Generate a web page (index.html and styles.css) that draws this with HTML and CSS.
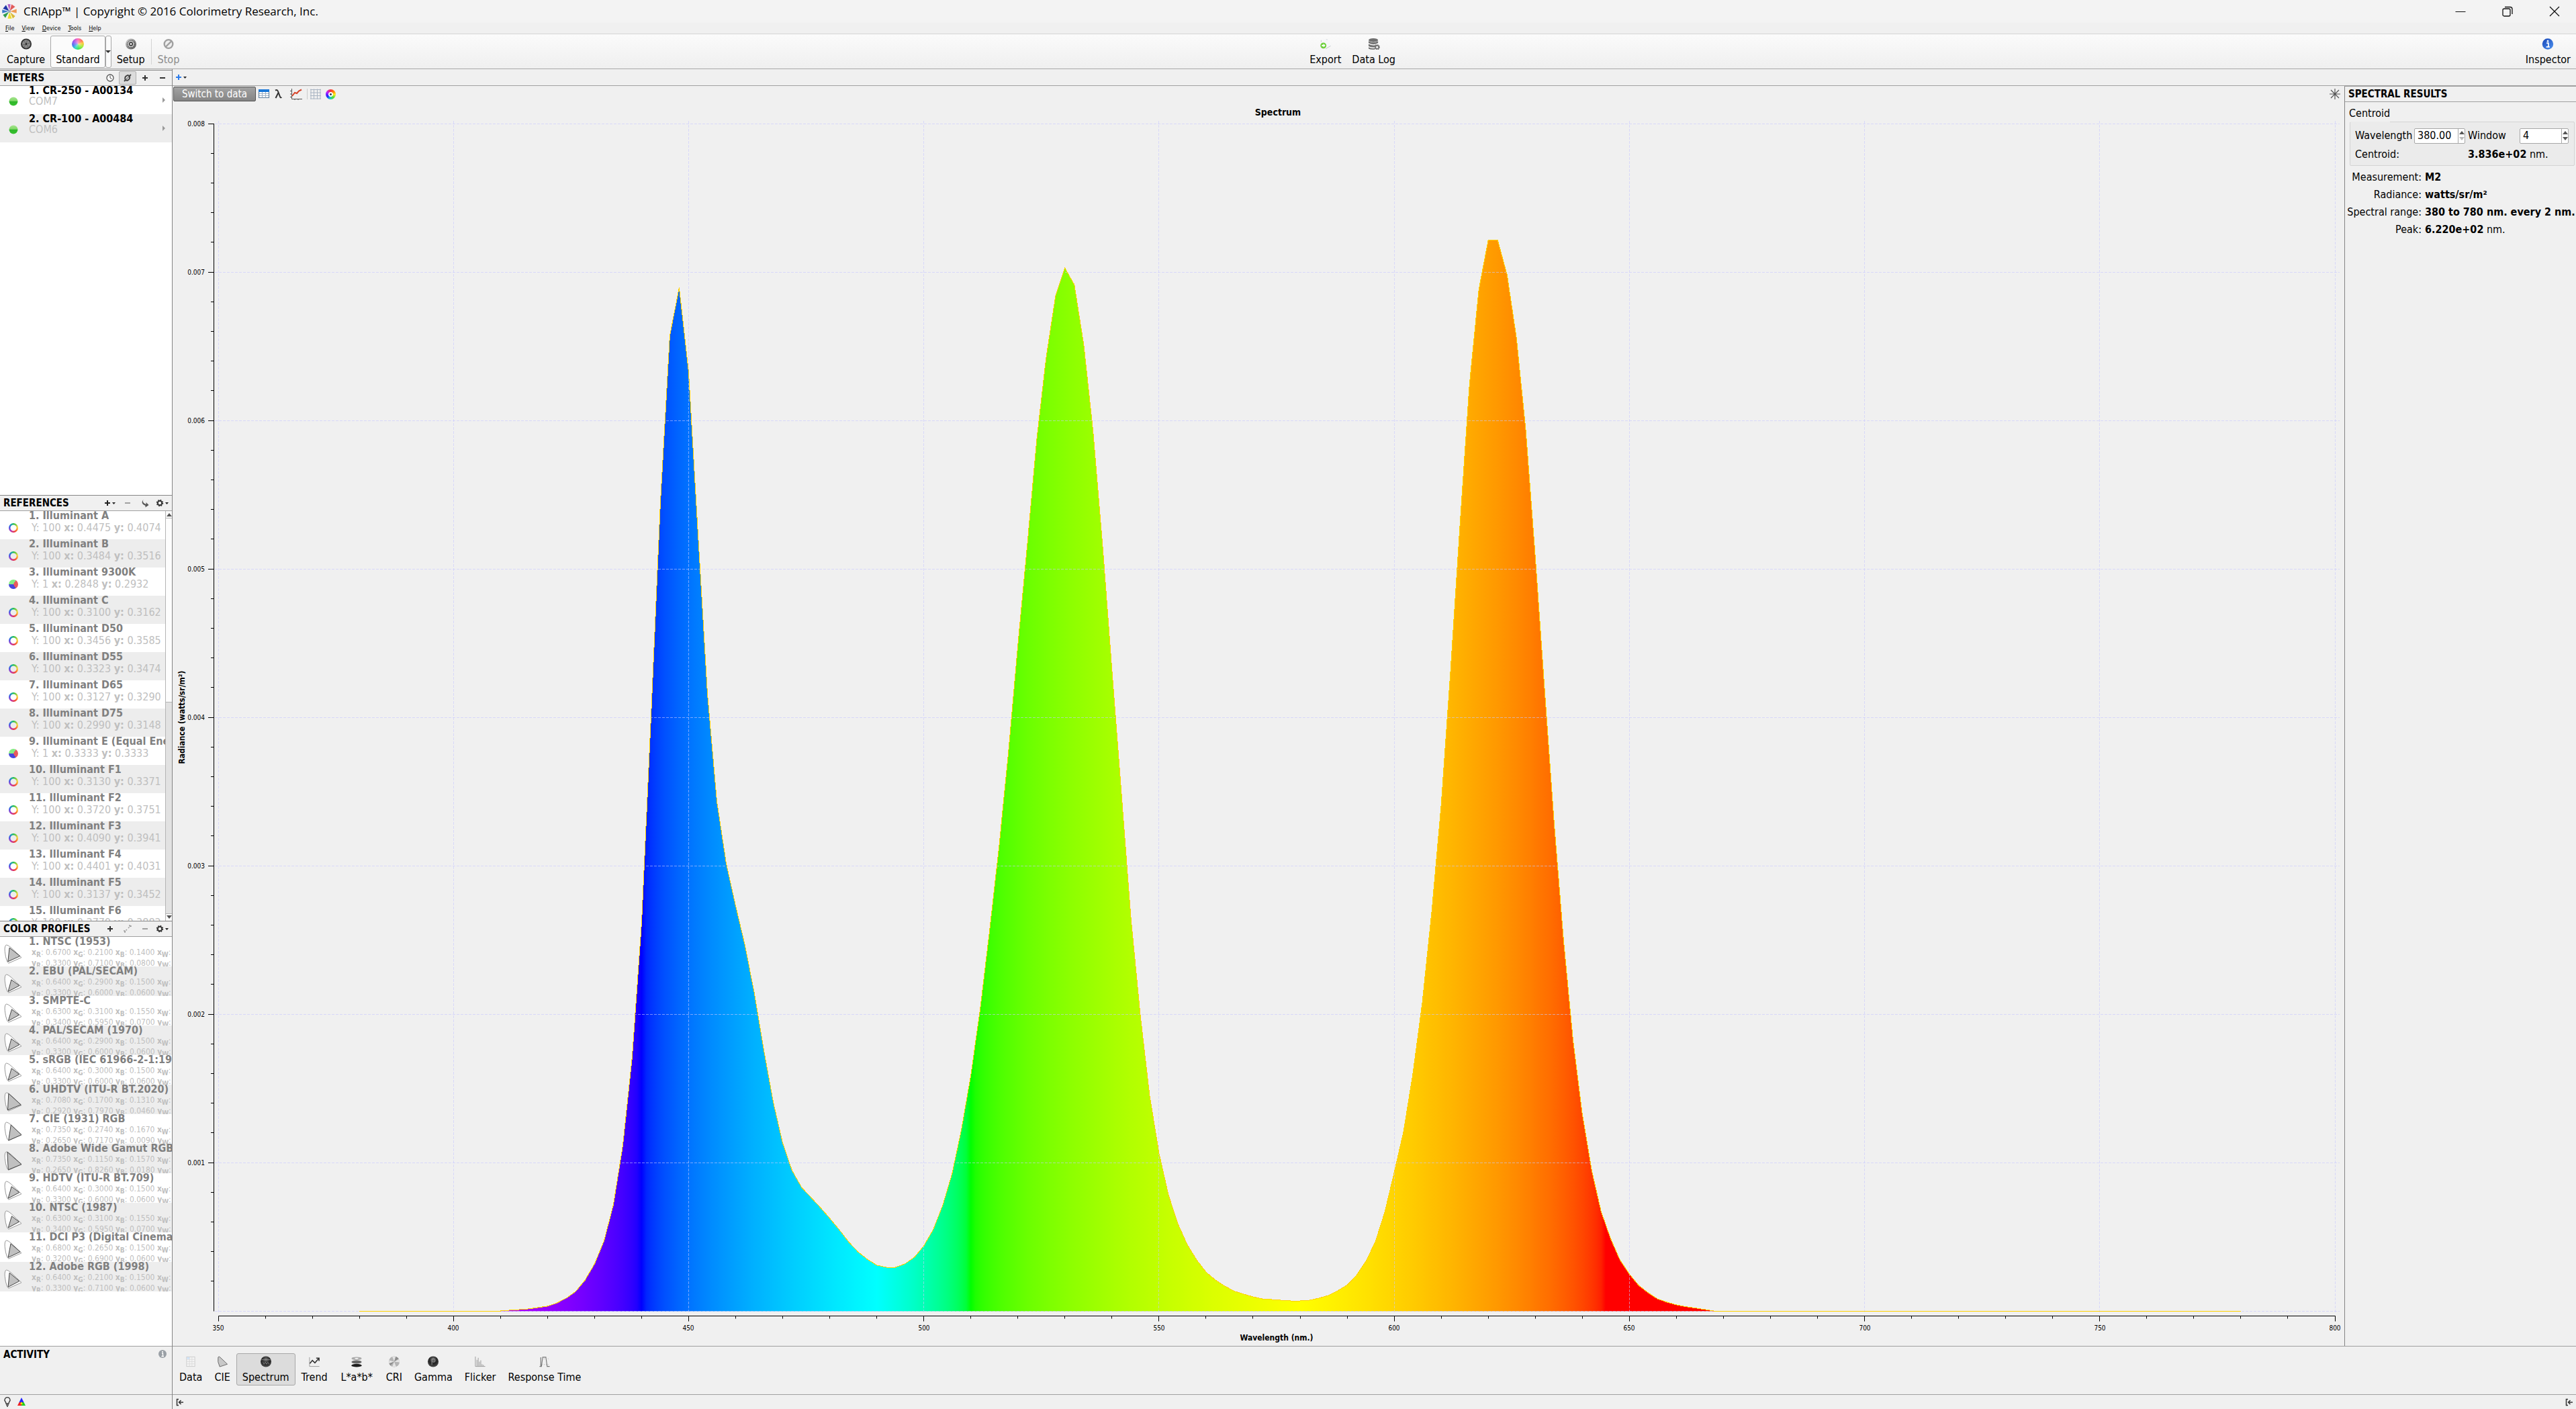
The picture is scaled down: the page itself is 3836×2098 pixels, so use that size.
FILE: index.html
```html
<!DOCTYPE html>
<html lang="en">
<head>
<meta charset="utf-8">
<title>CRIApp</title>
<link rel="stylesheet" href="styles.css">
</head>
<body>
<svg class="defs" aria-hidden="true">
  <defs>
    <radialGradient id="dark-ball" cx="50%" cy="30%" r="75%"><stop offset="0" stop-color="#777"/><stop offset="0.5" stop-color="#222"/><stop offset="1" stop-color="#555"/></radialGradient>
    <linearGradient id="steel" x1="0" y1="0" x2="1" y2="1"><stop offset="0" stop-color="#ddd"/><stop offset="0.5" stop-color="#8a8a8a"/><stop offset="1" stop-color="#555"/></linearGradient>
    <linearGradient id="green-ball" x1="0" y1="0" x2="0" y2="1"><stop offset="0" stop-color="#a6e48f"/><stop offset="0.45" stop-color="#7fd866"/><stop offset="0.5" stop-color="#2fb52a"/><stop offset="1" stop-color="#37c22f"/></linearGradient>
    <linearGradient id="blue-ball" x1="0" y1="0" x2="1" y2="1"><stop offset="0" stop-color="#1746b8"/><stop offset="1" stop-color="#4f93ef"/></linearGradient>
    <symbol id="plus" viewBox="0 0 26 20"><path d="M9 10h8M13 6v8" stroke="#333" stroke-width="2" fill="none"/></symbol>
    <symbol id="plus-menu" viewBox="0 0 26 20"><path d="M5 10h8M9 6v8" stroke="#222" stroke-width="2" fill="none"/><path d="M16 9h5l-2.500 3z" fill="#222"/></symbol>
    <symbol id="minus" viewBox="0 0 26 20"><path d="M9 10h8" stroke="currentColor" stroke-width="2"/></symbol>
    <symbol id="gear-menu" viewBox="0 0 26 20"><circle cx="9" cy="10" r="3.200" fill="none" stroke="#333" stroke-width="2"/><circle cx="9" cy="10" r="4.500" fill="none" stroke="#333" stroke-width="1.500" stroke-dasharray="1.800 1.734"/><path d="M17 9h5l-2.500 3z" fill="#222"/></symbol>
    <symbol id="dock" viewBox="0 0 16 16"><path d="M6 3.500H3.500v9H6M6.500 8H13M9.500 5L6.500 8l3 3" fill="none" stroke="#333" stroke-width="1.500"/></symbol>
  </defs>
</svg>

<div class="app">
  <header class="titlebar">
    <svg class="logo" viewBox="0 0 24 24">
      <g stroke="#fff" stroke-width="0.500">
        <path d="M12 12L9 1l5 0z" fill="#b05ac0"/><path d="M12 12L15 1l6 4z" fill="#e05a5a"/><path d="M12 12l11-4 0 7z" fill="#ee9a55"/><path d="M12 12l9 7-4 4z" fill="#d8b93a"/>
        <path d="M12 12l4 11-7 0z" fill="#ecdc2c"/><path d="M12 12L6 22l-4-5z" fill="#2d9a4a"/><path d="M12 12L1 15l0-6z" fill="#3a7ac8"/><path d="M12 12L2 8l5-6z" fill="#1f35a5"/>
      </g>
      <circle cx="12" cy="12" r="2" fill="#9ab"/>
    </svg>
    <h1 class="app-title">CRIApp™ | Copyright © 2016 Colorimetry Research, Inc.</h1>
    <div class="window-buttons">
      <button type="button" aria-label="Minimize"><svg viewBox="0 0 16 16"><path d="M0.500 8.500h15" stroke="#111"/></svg></button>
      <button type="button" aria-label="Restore"><svg viewBox="0 0 16 16"><rect x="1" y="4" width="11" height="11" rx="2" fill="none" stroke="#111" stroke-width="1.300"/><path d="M4 1.500h8q3 0 3 3v7.500" fill="none" stroke="#111" stroke-width="1.300"/></svg></button>
      <button type="button" aria-label="Close"><svg viewBox="0 0 16 16"><path d="M1 1l14 14M15 1L1 15" stroke="#111" stroke-width="1.300"/></svg></button>
    </div>
  </header>

  <nav class="menubar">
    <button type="button"><u>F</u>ile</button>
    <button type="button"><u>V</u>iew</button>
    <button type="button"><u>D</u>evice</button>
    <button type="button"><u>T</u>ools</button>
    <button type="button"><u>H</u>elp</button>
  </nav>

  <div class="toolbar">
    <div class="tool-group">
      <button type="button" class="tool"><svg viewBox="0 0 18 18"><circle cx="9" cy="9" r="7.500" fill="#8a8a8a" stroke="#333" stroke-width="2"/><path d="M9 9L5 3M9 9l7-2M9 9l4 6M9 9l-7 2M9 9l2-7M9 9l-4 6" stroke="#555" stroke-width="0.800"/><circle cx="9" cy="9" r="1.300" fill="#222"/></svg><span>Capture</span></button>
      <button type="button" class="tool tool-on"><i class="wheel"></i><span>Standard</span></button>
      <button type="button" class="tool-drop" aria-label="Capture mode"><svg viewBox="0 0 8 6"><path d="M0 1h8l-4 4z" fill="#333"/></svg></button>
      <button type="button" class="tool"><svg viewBox="0 0 18 18"><circle cx="9" cy="9" r="8.500" fill="url(#steel)"/><circle cx="9" cy="9" r="5.500" fill="#c4c4c4" stroke="#444" stroke-dasharray="2 1"/><circle cx="9" cy="9" r="2.500" fill="#ddd" stroke="#222" stroke-width="1.300"/></svg><span>Setup</span></button>
      <span class="tool-sep"></span>
      <button type="button" class="tool" disabled><svg viewBox="0 0 18 18"><circle cx="9" cy="9" r="6.700" fill="#eee" stroke="#a0a0a0" stroke-width="2.500"/><path d="M4.500 13.500l9-9" stroke="#a0a0a0" stroke-width="2.500"/></svg><span>Stop</span></button>
    </div>
    <div class="tool-group">
      <button type="button" class="tool"><svg viewBox="0 0 18 18"><path d="M3 3l9-2 6 11-9 5z" fill="#f6f7f9"/><path d="M9 16.500l8-4.500" stroke="#bfc3c8"/><path d="M9.500 1l3 1-1.500 1z" fill="#d0d3d8"/><path d="M2 3v3" stroke="#c8c8c8"/><circle cx="5.500" cy="11.500" r="4.700" fill="#6ccf3a"/><path d="M3 10.200h2.500V8.500L8.700 11.500 5.500 14.300v-1.700H3z" fill="#fff"/></svg><span>Export</span></button>
      <button type="button" class="tool"><svg viewBox="0 0 18 18"><g fill="#707070"><ellipse cx="8" cy="3" rx="7.500" ry="3"/><path d="M0.500 4.500q7.500 4 15 0v3q-7.500 4-15 0zM0.500 9q6 3.500 11 1.500l-1 3.500q-6 1-10-1.500zM0.500 14q4 2.500 9.500 1.500l1 2q-7 1-10.500-1z"/></g><circle cx="14" cy="14" r="2.700" fill="#eee" stroke="#707070" stroke-width="1.800"/><circle cx="14" cy="14" r="3.900" fill="none" stroke="#707070" stroke-width="1.300" stroke-dasharray="1.500 1.560"/></svg><span>Data Log</span></button>
    </div>
    <div class="tool-group">
      <button type="button" class="tool"><svg viewBox="0 0 18 18"><circle cx="9" cy="9" r="8.700" fill="url(#blue-ball)"/><path d="M7 7.500h3v6M6.500 13.700h5.500" stroke="#fff" stroke-width="1.800" fill="none"/><circle cx="9" cy="4.400" r="1.400" fill="#fff"/></svg><span>Inspector</span></button>
    </div>
  </div>

  <div class="workspace">
    <aside class="sidebar">
      <section class="dock">
        <div class="dock-head">
          <h2>METERS</h2>
          <button type="button" aria-label="Schedule"><svg viewBox="0 0 26 20"><circle cx="13" cy="10" r="5" fill="#fff" stroke="#555" stroke-width="1.300"/><path d="M13 6.500V10l2.500 1.500" fill="none" stroke="#444"/></svg></button>
          <button type="button" class="pressed" aria-label="Connect" aria-pressed="true"><svg viewBox="0 0 26 20"><path d="M8 15l2.500-2.500M15.500 7.500L18 5M9.500 12.500q-1.500-5 4-6.500l2.500 1.500q1 5-4 6.500z" fill="none" stroke="#444" stroke-width="2"/><path d="M10 13l6-6" stroke="#444"/></svg></button>
          <button type="button" aria-label="Add meter"><svg><use href="#plus"/></svg></button>
          <button type="button" aria-label="Remove meter"><svg><use href="#minus"/></svg></button>
        </div>
        <ul class="list meters">
          <li><svg class="row-icon" viewBox="0 0 14 14"><circle cx="7" cy="7" r="6.500" fill="url(#green-ball)"/></svg><div class="row-text"><b>1. CR-250 - A00134</b><span>COM7</span></div><svg class="chevron" viewBox="0 0 4 8"><path d="M0 0l4 4-4 4z"/></svg></li>
          <li><svg class="row-icon" viewBox="0 0 14 14"><circle cx="7" cy="7" r="6.500" fill="url(#green-ball)"/></svg><div class="row-text"><b>2. CR-100 - A00484</b><span>COM6</span></div><svg class="chevron" viewBox="0 0 4 8"><path d="M0 0l4 4-4 4z"/></svg></li>
        </ul>
      </section>
      <section class="dock">
        <div class="dock-head">
          <h2>REFERENCES</h2>
          <button type="button" aria-label="Add reference"><svg><use href="#plus-menu"/></svg></button>
          <button type="button" class="faded" aria-label="Remove reference"><svg><use href="#minus"/></svg></button>
          <button type="button" aria-label="Apply"><svg viewBox="0 0 26 20"><path d="M10.500 4.500q-2.500 5 4 7.500v-3l4 4-5 3.500v-2.500q-8-2.500-3-9.500z" fill="#555"/></svg></button>
          <button type="button" aria-label="Reference options"><svg><use href="#gear-menu"/></svg></button>
        </div>
        <div class="scroll-area">
          <ul class="list references" id="references"></ul>
          <div class="scrollbar">
            <span class="scroll-btn"><svg viewBox="0 0 8 5"><path d="M0 5l4-5 4 5z"/></svg></span>
            <span class="scroll-thumb"></span>
            <span class="scroll-track"></span>
            <span class="scroll-btn"><svg viewBox="0 0 8 5"><path d="M0 0l4 5 4-5z"/></svg></span>
          </div>
        </div>
      </section>
      <section class="dock">
        <div class="dock-head">
          <h2>COLOR PROFILES</h2>
          <button type="button" aria-label="Add profile"><svg><use href="#plus"/></svg></button>
          <button type="button" aria-label="Expand"><svg viewBox="0 0 26 20"><path d="M8 12v3h3M15 5h3v3M8.500 14.500l3.500-3.500M14 9l3.500-3.500" fill="none" stroke="#a0a0a0" stroke-width="1.500" stroke-dasharray="2 1"/></svg></button>
          <button type="button" class="faded" aria-label="Remove profile"><svg><use href="#minus"/></svg></button>
          <button type="button" aria-label="Profile options"><svg><use href="#gear-menu"/></svg></button>
        </div>
        <ul class="list profiles" id="profiles"></ul>
      </section>
      <section class="activity">
        <h2>ACTIVITY</h2>
        <svg viewBox="0 0 14 14"><circle cx="7" cy="7" r="6" fill="#9aa0a6"/><path d="M6 6h1.500v4.500M5.500 10.500h3.500" stroke="#fff" stroke-width="1.300" fill="none"/><circle cx="7" cy="3.700" r="1" fill="#fff"/></svg>
      </section>
      <footer class="status status-left">
        <svg viewBox="0 0 16 16"><path d="M6 11q0-2-1.500-3.500a4 4 0 1 1 7 0Q10 9 10 11zM6 13h4M7 15h2" fill="none" stroke="#333" stroke-width="1.300"/></svg>
        <svg viewBox="0 0 16 16"><path d="M8 2l3.500 7h-7z" fill="#22f"/><path d="M4.500 9H8v5H2z" fill="#e22"/><path d="M11.500 9H8v5h6z" fill="#2c2"/><path d="M8 8l2 4H6z" fill="#fd0"/></svg>
      </footer>
    </aside>

    <main class="main">
      <div class="tabstrip">
        <button type="button" aria-label="New tab"><svg viewBox="0 0 26 20"><path d="M5 10h8M9 6v8" stroke="#2b7bea" stroke-width="2"/><path d="M16 9h5l-2.500 3z" fill="#222"/></svg></button>
      </div>
      <div class="content">
        <section class="view">
          <div class="chart-tools">
            <button type="button" class="switch">Switch to data</button>
            <button type="button" class="mini" aria-label="Table"><svg viewBox="0 0 18 18"><rect x="1.500" y="2.500" width="15" height="12" fill="#fff" stroke="#5a7a9a"/><rect x="1" y="2" width="16" height="4" fill="#1a78d8"/><path d="M2 8.500h14M2 11.500h14M6.500 6v8.500M11.500 6v8.500" stroke="#9db0c4"/></svg></button>
            <button type="button" class="mini" aria-label="Wavelength"><svg viewBox="0 0 18 18"><path d="M4 3.500q3-1.500 4 1.500l3 8q0.700 2 2.500 1M8.500 7L4.500 15" fill="none" stroke="#333" stroke-width="2"/></svg></button>
            <button type="button" class="mini mini-wide" aria-label="Plot"><svg viewBox="0 0 18 18"><path d="M2.500 1v15.500H18M0 13.500h2.500M0 9h2.500M0 4.500h2.500M7 18v-2M12 18v-2" fill="none" stroke="#555"/><path d="M3 12l4-5 3 1 3-3.500 4-2" fill="none" stroke="#d8452a" stroke-width="2"/></svg></button>
            <span class="mini-sep"></span>
            <button type="button" class="mini" aria-label="Grid"><svg viewBox="0 0 18 18"><path d="M2 1.500v15M6.500 1.500v15M11.500 1.500v15M16 1.500v15M1 2.500h16M1 7h16M1 11.500h16M1 16h16" stroke="#a9b4c2"/></svg></button>
            <button type="button" class="mini" aria-label="Colors"><i class="wheel wheel-eye"></i></button>
            <button type="button" class="mini mini-end" aria-label="Settings"><svg viewBox="0 0 18 18"><path d="M9 1v16M1 9h16M3 3l12 12M15 3L3 15" stroke="#555" stroke-width="1.200"/></svg></button>
          </div>
          <svg class="chart" id="chart" role="img" aria-label="Spectrum"></svg>
        </section>

        <aside class="inspector">
          <h2>SPECTRAL RESULTS</h2>
          <fieldset class="centroid">
            <legend>Centroid</legend>
            <label for="wavelength">Wavelength</label>
            <span class="spin"><input id="wavelength" type="text" value="380.00"><span class="spin-arrows"><svg viewBox="0 0 8 5"><path d="M0 5l4-5 4 5z"/></svg><svg class="off" viewBox="0 0 8 5"><path d="M0 0l4 5 4-5z"/></svg></span></span>
            <label for="window">Window</label>
            <span class="spin"><input id="window" type="text" value="4"><span class="spin-arrows"><svg viewBox="0 0 8 5"><path d="M0 5l4-5 4 5z"/></svg><svg viewBox="0 0 8 5"><path d="M0 0l4 5 4-5z"/></svg></span></span>
            <span class="centroid-label">Centroid:</span>
            <span class="centroid-value"><b>3.836e+02</b> nm.</span>
          </fieldset>
          <dl class="results">
            <dt>Measurement:</dt><dd><b>M2</b></dd>
            <dt>Radiance:</dt><dd><b>watts/sr/m²</b></dd>
            <dt>Spectral range:</dt><dd><b>380 to 780 nm. every 2 nm.</b></dd>
            <dt>Peak:</dt><dd><b>6.220e+02</b> nm.</dd>
          </dl>
        </aside>
      </div>

      <div class="view-tabs">
        <button type="button" class="tool"><svg viewBox="0 0 18 18"><rect x="2.500" y="1.500" width="13" height="15" fill="#f4f4f4" stroke="#ccc"/><path d="M2.500 5.500h13M2.500 9h13M2.500 12.500h13M7 2v14M11 2v14" stroke="#dcdcdc"/><path d="M3 2h4v3H3z" fill="#cfe3f8"/></svg><span>Data</span></button>
        <button type="button" class="tool"><svg viewBox="0 0 18 18"><path d="M5 17Q1 9 2.500 2q1-2 3 0L17 13z" fill="#c8c8c8" stroke="#666"/></svg><span>CIE</span></button>
        <button type="button" class="tool tool-on tool-pressed"><svg viewBox="0 0 18 18"><circle cx="9" cy="9" r="8.500" fill="url(#dark-ball)"/><path d="M2 6h14M4 9l2 4 2-3 2 3 2-3 2 3" stroke="#999" fill="none" stroke-width="0.800"/></svg><span>Spectrum</span></button>
        <button type="button" class="tool"><svg viewBox="0 0 18 18"><path d="M1.500 2v14.500H17" fill="none" stroke="#999"/><path d="M2 12l4-5 4 4 6-7M12 3.500h4.500V8" fill="none" stroke="#333" stroke-width="1.700"/></svg><span>Trend</span></button>
        <button type="button" class="tool tool-lab"><svg viewBox="0 0 18 18"><ellipse cx="9" cy="4" rx="8" ry="2.500" fill="#aaa"/><ellipse cx="9" cy="4" rx="3" ry="1.200" fill="#eee"/><ellipse cx="9" cy="9.500" rx="8" ry="2.500" fill="#666"/><ellipse cx="9" cy="15" rx="8" ry="2.500" fill="#1c1c1c"/></svg><span>L*a*b*</span></button>
        <button type="button" class="tool"><svg viewBox="0 0 18 18"><circle cx="9" cy="9" r="8.500" fill="#b4b4b4"/><path d="M9 9L6 1l5-0.500zM9 9l8-4 0.500 5zM9 9l3 8-6 0zM9 9L1 12 1 7z" fill="#e4e4e4"/><path d="M9 9L12 1l4 3zM9 9L3 15l-2-3z" fill="#8c8c8c"/></svg><span>CRI</span></button>
        <button type="button" class="tool"><svg viewBox="0 0 18 18"><circle cx="9" cy="9" r="8.500" fill="url(#dark-ball)"/><path d="M7 14V5q5-2 5 2t-4 2" fill="none" stroke="#999"/></svg><span>Gamma</span></button>
        <button type="button" class="tool"><svg viewBox="0 0 18 18"><path d="M1.500 1v15.500H17" fill="none" stroke="#999"/><path d="M4 16V6M6 16V3M8 16V9M10 16V7M12 16v-3M14 16v-2" stroke="#aaa" stroke-width="1.200"/></svg><span>Flicker</span></button>
        <button type="button" class="tool"><svg viewBox="0 0 18 18"><path d="M1 16.500h3L6 2h5l2 14.500h4M3 2v15" fill="none" stroke="#777" stroke-width="1.200"/><path d="M2 4.500h15M2 13.500h15" stroke="#aaa" stroke-dasharray="1 2"/></svg><span>Response Time</span></button>
      </div>
      <footer class="status">
        <svg><use href="#dock"/></svg>
        <svg><use href="#dock"/></svg>
      </footer>
    </main>
  </div>
</div>
<script src="app.js"></script>
</body>
</html>
```
FILE: styles.css
```css
* { box-sizing: border-box; }

body {
  margin: 0;
  background: #f0f0f0;
  color: #000;
  font: 16px/22px "DejaVu Sans Condensed", "DejaVu Sans", sans-serif;
}

h1, h2, ul, dl, dd { margin: 0; padding: 0; }
ul { list-style: none; }

button {
  margin: 0;
  padding: 0;
  border: 0;
  background: none;
  color: inherit;
  font: inherit;
}

.defs { position: absolute; width: 0; height: 0; }

.app {
  display: flex;
  flex-direction: column;
  height: 100vh;
}

/* Title bar */
.titlebar {
  display: flex;
  align-items: center;
  flex: none;
  height: 34px;
  padding: 0 24px 0 2px;
  background: #f3f3f3;
}
.logo { width: 24px; height: 24px; }
.app-title {
  flex: 1;
  padding-left: 9px;
  font: 17px/34px "Open Sans", sans-serif;
}
.window-buttons { display: flex; gap: 54px; }
.window-buttons button { width: 16px; height: 16px; }
.window-buttons svg { display: block; width: 16px; height: 16px; }

/* Menu bar */
.menubar {
  display: flex;
  flex: none;
  gap: 11px;
  height: 17px;
  padding: 0 8px;
  border-bottom: 1px solid #d4d4d4;
  font-size: 9px;
  line-height: 16px;
}
.menubar u { text-underline-offset: 1px; }

/* Tool bar */
.toolbar {
  display: flex;
  flex: none;
  justify-content: space-between;
  height: 52px;
  padding: 2px 0 0 2px;
  border-bottom: 1px solid #a8a8a8;
  background: linear-gradient(#fbfbfb, #efefef);
}
.tool-group { display: flex; }
.tool {
  display: flex;
  flex-direction: column;
  align-items: center;
  gap: 4px;
  height: 48px;
  padding: 3px 8px 0;
  border: 1px solid transparent;
  border-radius: 3px;
  line-height: 22px;
  white-space: nowrap;
}
.toolbar .tool { padding: 3px 7px 0; }
.tool svg { display: block; width: 18px; height: 18px; }
.tool:disabled { color: #8c8c8c; }
.tool-on { border-color: #a8a8a8; background: #fbfbfb; }
.tool-pressed { background: #dcdcdc; }
.tool-lab { min-width: 69px; }
.tool-drop {
  display: flex;
  align-items: center;
  justify-content: center;
  width: 9px;
  height: 48px;
  border: 1px solid #a8a8a8;
  border-radius: 3px;
  background: #fbfbfb;
}
.tool-drop svg { flex: none; width: 8px; height: 6px; }
.tool-sep { width: 1px; height: 38px; margin: 5px 1px; background: #d4d4d4; }

.wheel {
  display: block;
  width: 18px;
  height: 18px;
  border-radius: 50%;
  background:
    radial-gradient(circle, rgba(255, 255, 255, 0.5), transparent 60%),
    conic-gradient(#ff6ab8, #ff7a55 50deg, #ffc83c 80deg, #a8ec3c 120deg, #3ce650 170deg, #30d8c8 215deg, #4878f0 255deg, #a050f0 300deg, #ff6ab8);
}
.wheel-eye {
  width: 15px;
  height: 15px;
  background:
    radial-gradient(circle, #345 1px, #fff 2px, #fff 3px, transparent 4px),
    conic-gradient(#f33, #f80 50deg, #fe2 90deg, #5d3 140deg, #1cc 190deg, #22f 240deg, #b2f 300deg, #f33);
}

/* Work space */
.workspace { display: flex; flex: 1; min-height: 0; }

.sidebar {
  display: flex;
  flex-direction: column;
  flex: none;
  width: 257px;
  padding-top: 1px;
  border-right: 1px solid #858585;
}
.dock {
  display: flex;
  flex-direction: column;
  flex: 1 1 0;
  min-height: 0;
  border-top: 1px solid #858585;
}
.dock-head {
  display: flex;
  align-items: center;
  flex: none;
  height: 23px;
  padding: 0 1px 0 5px;
  border-bottom: 1px solid #a0a0a0;
}
h2 { font-size: 15px; line-height: 22px; }
.dock-head h2 { flex: 1; }
.dock-head button { width: 26px; height: 20px; color: #333; }
.dock-head svg, .tabstrip svg { display: block; width: 26px; height: 20px; }
.dock-head .pressed { border-radius: 2px; outline: 1px solid #b0b0b0; outline-offset: -1px; background: #dcdcdc; }
.dock-head .faded { color: #a0a0a0; }

/* Lists */
.list { flex: 1; min-width: 0; min-height: 0; overflow: hidden; background: #fff; }
.list li { display: flex; height: 42px; overflow: hidden; }
.list li:nth-child(even) { background: #ededed; }
.row-icon { flex: none; width: 14px; height: 14px; margin: 16px 16px 0 13px; border-radius: 50%; }
.row-text { flex: 1; min-width: 0; overflow: hidden; white-space: nowrap; }
.row-text > * { display: block; padding-left: 4px; line-height: 24px; }
.row-text > b:first-child { padding-left: 0; line-height: 13px; }
.row-text sub { font-size: 10px; line-height: 1px; }
.meters .row-text > span { padding-left: 0; line-height: 19px; color: #c0c0c0; }
.chevron { flex: none; width: 4px; height: 8px; margin: 17px 10px; fill: #999; }
.references .row-text, .profiles .row-text { color: #bfbfbf; }
.references .row-text > b:first-child, .profiles .row-text > b:first-child { color: #808080; font-size: 16px; }
.ring {
  background:
    radial-gradient(circle, #fff 4px, transparent 5px),
    conic-gradient(#1fc04a, #f4d83c 80deg, #ff8a2a 120deg, #e8304a 170deg, #b03ac0 225deg, #3a58e8 285deg, #20a8b0 330deg, #1fc04a);
}
.list li:nth-child(even) .ring {
  background:
    radial-gradient(circle, #ededed 4px, transparent 5px),
    conic-gradient(#1fc04a, #f4d83c 80deg, #ff8a2a 120deg, #e8304a 170deg, #b03ac0 225deg, #3a58e8 285deg, #20a8b0 330deg, #1fc04a);
}
.pie { background: conic-gradient(#84ec84 30deg, #e85a5e 30deg 150deg, #4646dc 150deg 270deg, #84ec84 270deg); }
.references .row-icon { margin-top: 18px; }

.profiles li { height: 44px; }
.profiles .row-icon { width: 34px; height: 44px; margin: 0 9px 0 0; border-radius: 0; }
.profiles .row-text { font-size: 12px; }
.profiles .row-text > span { line-height: 16px; }
.profiles .row-text > b:first-child { margin-bottom: 2px; }

.scroll-area { display: flex; flex: 1; min-height: 0; }
.scrollbar {
  display: flex;
  flex-direction: column;
  flex: none;
  width: 10px;
  border-left: 1px solid #b4b4b4;
  background: #fafafa;
}
.scroll-btn { display: flex; align-items: center; justify-content: center; flex: none; height: 10px; }
.scroll-btn svg { width: 8px; height: 5px; fill: #555; }
.scroll-thumb { flex: 46; border: 1px solid #b4b4b4; border-width: 1px 0; background: #fdfdfd; }
.scroll-track { flex: 53; border-bottom: 1px solid #b4b4b4; background: #e2e2e2; }

.activity {
  display: flex;
  justify-content: space-between;
  flex: none;
  height: 72px;
  padding: 1px 7px 0 5px;
  border-top: 1px solid #a0a0a0;
}
.activity svg { width: 14px; height: 14px; margin-top: 3px; }

.status {
  display: flex;
  align-items: center;
  justify-content: space-between;
  flex: none;
  height: 22px;
  padding: 0 2px 0 3px;
  border-top: 1px solid #a0a0a0;
}
.status svg { width: 16px; height: 16px; }
.status-left { justify-content: flex-start; gap: 5px; }

/* Main area */
.main { display: flex; flex-direction: column; flex: 1; min-width: 0; }
.tabstrip { flex: none; height: 25px; padding-top: 2px; border-bottom: 1px solid #a0a0a0; }
.tabstrip button { display: block; }
.content { display: flex; flex: 1; min-height: 0; }
.view { display: flex; flex-direction: column; flex: 1; min-width: 0; }

.chart-tools { display: flex; align-items: center; flex: none; height: 24px; padding: 0 3px 0 1px; }
.switch {
  width: 123px;
  height: 22px;
  margin-right: 1px;
  border: 1px solid #555;
  border-radius: 2px;
  background: linear-gradient(#a2a2a2, #858585);
  color: #fff;
  font-size: 15px;
  line-height: 18px;
}
.mini { display: flex; align-items: center; justify-content: center; width: 22px; height: 20px; }
.mini svg { width: 18px; height: 18px; }
.mini-wide { width: 30px; }
.mini-end { margin-left: auto; }
.mini-sep { width: 1px; height: 16px; margin: 0 1px; background: #ccc; }

.chart { display: block; flex: 1; width: 100%; min-height: 0; }
.chart text { text-anchor: middle; }
.chart .tick { font-size: 10px; }
.chart .tick-y { text-anchor: end; }
.chart .chart-title { font-size: 14px; font-weight: bold; }
.chart .axis-title { font-size: 12px; font-weight: bold; }
.chart .axis { fill: none; stroke: #000; }
.chart .grid { fill: none; stroke: #c8c8ff; stroke-opacity: 0.6; stroke-dasharray: 4 2; }
.chart .curve { fill: none; stroke: #ffd200; shape-rendering: crispEdges; }

/* Inspector */
.inspector { flex: none; width: 345px; border-left: 1px solid #858585; border-top: 1px solid #a0a0a0; }
.inspector h2 { height: 23px; padding-left: 5px; border-bottom: 1px solid #a0a0a0; }
.centroid {
  display: grid;
  grid-template-columns: 88px 76px 81px 73px;
  gap: 4px 0;
  align-items: center;
  height: 66px;
  margin: 29px 2px 3px 7px;
  padding: 8px 0 5px 7px;
  border: 1px solid #d4d4d4;
  border-radius: 2px;
  background: #ebebeb;
}
.centroid legend { position: relative; top: -24px; height: 0; margin: 0 -9px; padding: 0; }
.centroid label:nth-of-type(2) { padding-left: 4px; }
.centroid-value { grid-column: 3 / 5; padding-left: 4px; }
.centroid-label { grid-column: 1 / 3; }
.spin { display: flex; height: 23px; border: 1px solid #a8a8a8; border-radius: 2px; background: #fff; }
.spin input { flex: 1; width: 0; padding: 0 4px; border: 0; background: none; font: inherit; }
.spin-arrows {
  display: flex;
  flex-direction: column;
  align-items: center;
  justify-content: center;
  gap: 4px;
  width: 10px;
  border-left: 1px solid #a8a8a8;
}
.spin-arrows svg { width: 8px; height: 5px; fill: #555; }
.spin-arrows .off { fill: #bbb; }
.results {
  display: grid;
  grid-template-columns: 112px 1fr;
  gap: 4px 5px;
  padding: 3px 0 0 2px;
  white-space: nowrap;
}
.results dt { text-align: right; justify-self: end; }

.view-tabs { display: flex; flex: none; height: 72px; padding: 10px 1px; border-top: 1px solid #a0a0a0; }
```
FILE: app.js
```js
// [name, Y, x, y, icon]
const references = [
  ['Illuminant A', '100', '0.4475', '0.4074'],
  ['Illuminant B', '100', '0.3484', '0.3516'],
  ['Illuminant 9300K', '1', '0.2848', '0.2932', 'pie'],
  ['Illuminant C', '100', '0.3100', '0.3162'],
  ['Illuminant D50', '100', '0.3456', '0.3585'],
  ['Illuminant D55', '100', '0.3323', '0.3474'],
  ['Illuminant D65', '100', '0.3127', '0.3290'],
  ['Illuminant D75', '100', '0.2990', '0.3148'],
  ['Illuminant E (Equal Energy)', '1', '0.3333', '0.3333', 'pie'],
  ['Illuminant F1', '100', '0.3130', '0.3371'],
  ['Illuminant F2', '100', '0.3720', '0.3751'],
  ['Illuminant F3', '100', '0.4090', '0.3941'],
  ['Illuminant F4', '100', '0.4401', '0.4031'],
  ['Illuminant F5', '100', '0.3137', '0.3452'],
  ['Illuminant F6', '100', '0.3779', '0.3882']
];

document.getElementById('references').innerHTML = references.map(([name, Y, x, y, icon], i) =>
  `<li><i class="row-icon ${icon || 'ring'}"></i><div class="row-text"><b>${i + 1}. ${name}</b>` +
  `<span>Y: ${Y} <b>x:</b> ${x} <b>y:</b> ${y}</span></div></li>`).join('');

// [name, red, green, blue, white] as chromaticity pairs
const profiles = [
  ['NTSC (1953)', [0.67, 0.33], [0.21, 0.71], [0.14, 0.08], [0.3101, 0.3162]],
  ['EBU (PAL/SECAM)', [0.64, 0.33], [0.29, 0.6], [0.15, 0.06], [0.3127, 0.329]],
  ['SMPTE-C', [0.63, 0.34], [0.31, 0.595], [0.155, 0.07], [0.3127, 0.329]],
  ['PAL/SECAM (1970)', [0.64, 0.33], [0.29, 0.6], [0.15, 0.06], [0.3127, 0.329]],
  ['sRGB (IEC 61966-2-1:1999)', [0.64, 0.33], [0.3, 0.6], [0.15, 0.06], [0.3127, 0.329]],
  ['UHDTV (ITU-R BT.2020)', [0.708, 0.292], [0.17, 0.797], [0.131, 0.046], [0.3127, 0.329]],
  ['CIE (1931) RGB', [0.735, 0.265], [0.274, 0.717], [0.167, 0.009], [0.3333, 0.3333]],
  ['Adobe Wide Gamut RGB', [0.735, 0.265], [0.115, 0.826], [0.157, 0.018], [0.3457, 0.3585]],
  ['HDTV (ITU-R BT.709)', [0.64, 0.33], [0.3, 0.6], [0.15, 0.06], [0.3127, 0.329]],
  ['NTSC (1987)', [0.63, 0.34], [0.31, 0.595], [0.155, 0.07], [0.3127, 0.329]],
  ['DCI P3 (Digital Cinema)', [0.68, 0.32], [0.265, 0.69], [0.15, 0.06], [0.314, 0.351]],
  ['Adobe RGB (1998)', [0.64, 0.33], [0.21, 0.71], [0.15, 0.06], [0.3127, 0.329]]
];

const locus = [[0.174, 0.005], [0.144, 0.03], [0.124, 0.058], [0.091, 0.133], [0.045, 0.295], [0.008, 0.538],
  [0.004, 0.655], [0.014, 0.75], [0.039, 0.812], [0.074, 0.834], [0.115, 0.826], [0.155, 0.806], [0.23, 0.754],
  [0.302, 0.692], [0.373, 0.624], [0.512, 0.487], [0.627, 0.372], [0.735, 0.265]];

const toIcon = pts => pts.map(([x, y]) => `${(7 + 34 * x).toFixed(1)},${(39.4 - 32.7 * y).toFixed(1)}`).join(' ');
const row = (axis, index, pts) => '<span>' + ['R', 'G', 'B', 'W'].map((c, i) =>
  `<b>${axis}<sub>${c}</sub></b>: ${pts[i][index].toFixed(4)}`).join(' ') + '</span>';

document.getElementById('profiles').innerHTML = profiles.map(([name, ...pts], i) =>
  `<li><svg class="row-icon" viewBox="0 0 34 44"><polygon points="${toIcon(locus)}" fill="#fff" stroke="#999"/>` +
  `<polygon points="${toIcon(pts.slice(0, 3))}" fill="#c0c0c0" stroke="#444"/></svg>` +
  `<div class="row-text"><b>${i + 1}. ${name}</b>${row('x', 0, pts)}${row('y', 1, pts)}</div></li>`).join('');

// Spectral radiance from 410 nm in 2 nm steps, in units of 1e-6 watts/sr/m²
const samples = [0, 5, 9, 14, 23, 32, 54, 86, 131, 208, 317, 471, 715, 1113, 1711, 2611, 3995, 5443, 6570, 6895,
  6330, 5231, 4158, 3434, 3014, 2729, 2462, 2136, 1756, 1407, 1131, 946, 833, 765, 697, 624, 548, 466, 398,
  348, 308, 294, 294, 317, 362, 439, 548, 710, 923, 1222, 1588, 2036, 2566, 3127, 3765, 4489, 5163, 5869,
  6421, 6837, 7027, 6914, 6511, 5923, 5163, 4321, 3489, 2656, 2000, 1452, 1063, 783, 588, 448, 344, 262, 208,
  167, 133, 113, 95, 81, 77, 72, 68, 68, 72, 86, 104, 136, 174, 240, 335, 466, 665, 932, 1208, 1602, 2081,
  2692, 3412, 4321, 5303, 6240, 6882, 7215, 7215, 6982, 6557, 5928, 5086, 4176, 3290, 2502, 1833, 1326, 946,
  670, 489, 344, 249, 172, 122, 81, 59, 41, 29, 20, 10, 0];

function rgb(nm) {
  let r = 0, g = 0, b = 0;
  if (nm < 440) { r = (440 - nm) / 60; b = 1; }
  else if (nm < 490) { g = (nm - 440) / 50; b = 1; }
  else if (nm < 510) { g = 1; b = (510 - nm) / 20; }
  else if (nm < 580) { r = (nm - 510) / 70; g = 1; }
  else if (nm < 645) { r = 1; g = (645 - nm) / 65; }
  else { r = 1; }
  return 'rgb(' + [r, g, b].map(v => Math.round(255 * Math.sqrt(v))).join(',') + ')';
}

function drawChart() {
  const svg = document.getElementById('chart');
  const { width, height } = svg.getBoundingClientRect();
  const left = 68, right = width - 14, top = 32, bottom = height - 52;
  const X = nm => left + (nm - 350) / 450 * (right - left);
  const Y = v => bottom - v / 8000 * (bottom - top);
  const px = v => Math.floor(v) + 0.5;

  let axis = `M61.5 ${px(top)}V${px(bottom)}M${px(left)} ${px(bottom + 7)}H${px(right)}`;
  let grid = '', labels = '', stops = '';
  for (let v = 0; v <= 8000; v += 200) {
    const major = v % 1000 === 0;
    if (v) axis += `M${major ? 53 : 57} ${px(Y(v))}H62`;
    if (major) {
      grid += `M63 ${px(Y(v))}H${width - 7}`;
      if (v) labels += `<text class="tick tick-y" x="48" y="${px(Y(v)) + 3.5}">${(v / 1e6).toFixed(3)}</text>`;
    }
  }
  for (let nm = 350; nm <= 800; nm += 10) {
    const major = nm % 50 === 0;
    axis += `M${px(X(nm))} ${px(bottom + 7)}v${major ? 8 : 4}`;
    if (major) {
      grid += `M${px(X(nm))} ${top - 4}V${bottom + 2}`;
      labels += `<text class="tick" x="${Math.round(X(nm))}" y="${Math.round(bottom) + 29}">${nm}</text>`;
    }
  }
  for (let nm = 380; nm <= 780; nm++) {
    stops += `<stop offset="${(nm - 380) / 400}" stop-color="${rgb(nm)}"/>`;
  }
  const line = samples.map((v, i) => `${X(410 + 2 * i).toFixed(1)},${Y(v).toFixed(1)}`).join(' ');
  const base = Y(0) + 0.5;

  svg.innerHTML =
    `<defs><linearGradient id="rainbow" gradientUnits="userSpaceOnUse" x1="${X(380)}" x2="${X(780)}" y1="0" y2="0">${stops}</linearGradient></defs>` +
    `<polygon points="${X(410)},${base} ${line} ${X(668)},${base}" fill="url(#rainbow)"/>` +
    `<path class="grid" d="${grid}"/>` +
    `<polyline class="curve" points="${X(380)},${base} ${X(410)},${base} ${line} ${X(668)},${base} ${X(780)},${base}"/>` +
    `<path class="axis" d="${axis}"/>${labels}` +
    `<text class="chart-title" x="${(left + right) / 2 + 2}" y="20">Spectrum</text>` +
    `<text class="axis-title" x="${(left + right) / 2}" y="${height - 8}">Wavelength (nm.)</text>` +
    `<text class="axis-title" transform="translate(18 ${(top + bottom) / 2}) rotate(-90)">Radiance (watts/sr/m²)</text>`;
}

drawChart();
window.addEventListener('resize', drawChart);
```
